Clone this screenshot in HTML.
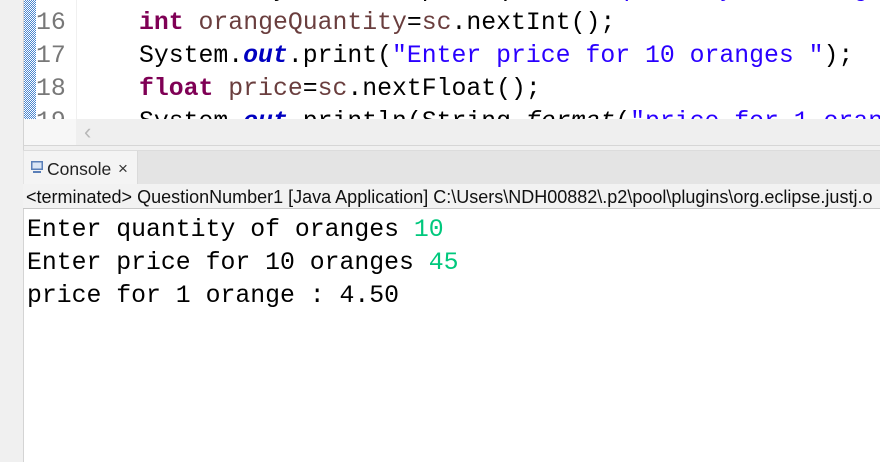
<!DOCTYPE html>
<html><head><style>
html,body{margin:0;width:880px;height:462px;overflow:hidden}
body{background:#f0f0f0;position:relative;font-family:"Liberation Mono",monospace}
.abs{position:absolute}
.code{font-size:24.8px;line-height:33px;white-space:pre}
.kw{color:#7f0055;font-weight:bold}
.fld{color:#0000c0;font-weight:bold;font-style:italic}
.str{color:#2a00ff}
.var{color:#6a3e3e}
</style></head><body>
<div class="abs" style="left:23px;top:0;width:1px;height:462px;background:#d4d4d4"></div>
<div class="abs" style="left:24px;top:0;width:856px;height:119px;background:#fff;overflow:hidden">
  <div class="abs" style="left:0;top:0;width:12px;height:119px;background:#7fa8dc;background-image:repeating-conic-gradient(#4a86d0 0 25%,#fff 0 50%);background-size:2px 2px;"></div>
  <div class="abs" style="left:52px;top:0;width:1px;height:119px;background:#f0f0f0"></div>
  <div class="abs code" style="left:12px;top:-26px;color:#787878">15
16
17
18
19</div>
  <div class="abs code" style="left:115px;top:-26px;color:#000">        System.<span class="fld">out</span>.print(<span class="str">"Enter quantity of oranges "</span>);
<span class="kw">int</span> <span class="var">orangeQuantity</span>=<span class="var">sc</span>.nextInt();
System.<span class="fld">out</span>.print(<span class="str">"Enter price for 10 oranges "</span>);
<span class="kw">float</span> <span class="var">price</span>=<span class="var">sc</span>.nextFloat();
System.<span class="fld">out</span>.println(String.<i>format</i>(<span class="str">"price for 1 orange : %.2f"</span>,<span class="var">price</span>/10));</div>
</div>
<div class="abs" style="left:24px;top:119px;width:52px;height:26px;background:#f7f7f7"></div>
<div class="abs" style="left:76px;top:119px;width:804px;height:26px;background:#efefef"></div>
<div class="abs" style="left:84px;top:119px;font-family:'Liberation Sans',sans-serif;font-size:22px;color:#b8b8b8;line-height:26px">&lsaquo;</div>
<div class="abs" style="left:23px;top:145px;width:857px;height:1px;background:#d6d6d6"></div>
<div class="abs" style="left:23px;top:150px;width:857px;height:34px;background:#e4e4e4;border-top:1px solid #dcdcdc;box-sizing:border-box"></div>
<div class="abs" style="left:24px;top:151px;width:114px;height:33px;background:#f4f4f4;border-right:1px solid #dadada;box-sizing:border-box"></div>
<svg class="abs" style="left:30px;top:160px" width="14" height="14" viewBox="0 0 14 14"><rect x="1" y="1" width="12" height="9" fill="#5a7fb8"/><rect x="2.5" y="2.5" width="9" height="6" fill="#dbe6f5"/><rect x="3" y="11" width="8" height="2" fill="#5a7fb8"/></svg>
<div class="abs" style="left:47px;top:156px;font-family:'Liberation Sans',sans-serif;font-size:17.5px;color:#222;line-height:26px">Console</div>
<div class="abs" style="left:118px;top:156px;font-family:'Liberation Sans',sans-serif;font-size:17px;color:#333;line-height:26px">×</div>
<div class="abs" style="left:23px;top:184px;width:857px;height:25px;background:#f2f2f2;border-bottom:1px solid #c8c8c8;box-sizing:border-box;overflow:hidden">
<div class="abs" style="left:3px;top:1px;font-family:'Liberation Sans',sans-serif;font-size:18px;color:#111;line-height:24px;white-space:nowrap">&lt;terminated&gt; QuestionNumber1 [Java Application] C:\Users\NDH00882\.p2\pool\plugins\org.eclipse.justj.o</div>
</div>
<div class="abs" style="left:24px;top:209px;width:856px;height:253px;background:#fff"></div>
<div class="abs code" style="left:27px;top:214px;color:#000">Enter quantity of oranges <span style="color:#00c87d">10</span>
Enter price for 10 oranges <span style="color:#00c87d">45</span>
price for 1 orange : 4.50</div>
</body></html>
